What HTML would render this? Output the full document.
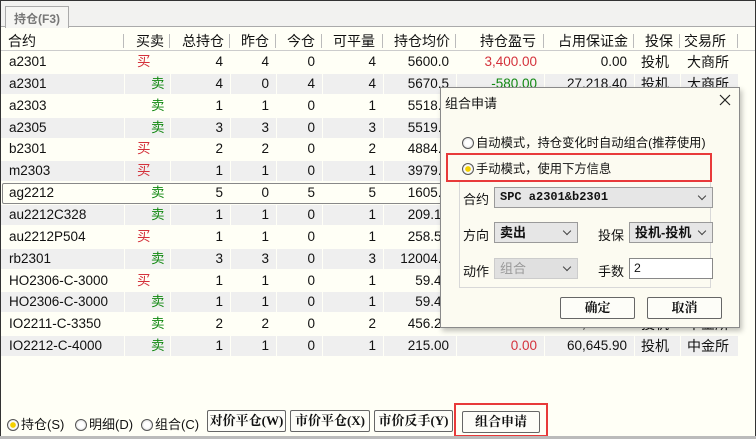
<!DOCTYPE html><html><head><meta charset="utf-8"><style>
*{box-sizing:border-box;margin:0;padding:0}
body{width:756px;height:439px;overflow:hidden;background:#fffff6;font-family:"Liberation Sans","Noto Sans CJK SC",sans-serif;position:relative;color:#111}
.frame{position:absolute;left:0;top:0;width:756px;height:439px;border:1px solid #333;border-bottom:none}
.tabbar{position:absolute;left:1px;top:1px;width:754px;height:26px;background:#f2f2f0;border-bottom:1px solid #aaa}
.tab{position:absolute;left:4px;top:5px;width:64px;height:22px;border:1px solid #aaa;border-bottom:none;background:#f6f6f3;font-size:12px;color:#777;font-weight:bold;padding:3px 0 0 8px}
.a{position:absolute;white-space:nowrap}
.hd{position:absolute;top:31px;font-size:14px;height:20px}
.sep{position:absolute;top:34px;width:1px;height:14px;background:#bbb}
.hline{position:absolute;left:1px;top:50px;width:754px;height:1px;background:#ccc}
.row{position:absolute;left:1px;height:22px;font-size:13.5px}
.c{position:absolute;top:1px;height:20px;line-height:20px;white-space:nowrap}
.sh .c{background:#efefef}
.r{text-align:right;padding-right:7px}
.red{color:#d4323c}.grn{color:#118811}
.dlg{position:absolute;left:440px;top:87px;width:300px;height:241px;background:#fcfbf1;border:1px solid #8a8a8a;box-shadow:2px 3px 5px rgba(0,0,0,.25);font-size:12.3px}
.rad{display:inline-block;width:12px;height:12px;border-radius:50%;border:1px solid #555;background:radial-gradient(circle,#fff 40%,#ccc);vertical-align:-2px;margin-right:2px}
.rad.on{background:radial-gradient(circle,#f4d000 35%,#fff 45%,#ccc)}
.combo{position:absolute;height:21px;background:#e6e6e6;border:1px solid #9a9a9a;font-size:13px;font-weight:bold;line-height:19px;padding-left:5px}
.combo:after{content:"";position:absolute;right:7px;top:5px;width:5px;height:5px;border-right:1px solid #444;border-bottom:1px solid #444;transform:rotate(45deg)}
.btn{position:absolute;height:22px;border:1px solid #666;border-radius:2px;background:#fdfdf8;font-size:13px;font-weight:bold;text-align:center;line-height:20px;font-family:"Liberation Serif","Noto Serif CJK SC",serif}
.redbox{position:absolute;border:2px solid #e83a3a}
</style></head><body>
<div class="frame"></div>
<div class="tabbar"><div class="tab">持仓(F3)</div></div>

<div class="hd" style="left:8px">合约</div>
<div class="hd" style="left:136px">买卖</div>
<div class="hd" style="left:182px">总持仓</div>
<div class="hd" style="left:241px">昨仓</div>
<div class="hd" style="left:287px">今仓</div>
<div class="hd" style="left:333px">可平量</div>
<div class="hd" style="left:394px">持仓均价</div>
<div class="hd" style="left:480px">持仓盈亏</div>
<div class="hd" style="left:558px">占用保证金</div>
<div class="hd" style="left:645px">投保</div>
<div class="hd" style="left:684px">交易所</div>
<div class="sep" style="left:123px"></div><div class="sep" style="left:169px"></div><div class="sep" style="left:229px"></div><div class="sep" style="left:275px"></div><div class="sep" style="left:321px"></div><div class="sep" style="left:382px"></div><div class="sep" style="left:455px"></div><div class="sep" style="left:543px"></div><div class="sep" style="left:633px"></div><div class="sep" style="left:679px"></div><div class="sep" style="left:737px"></div>
<div class="hline"></div>

<div id="rows"></div>
<script>
var D=[
["a2301","买",4,4,0,4,"5600.0","3,400.00","0.00","大商所"],
["a2301","卖",4,0,4,4,"5670.5","-580.00","27,218.40","大商所"],
["a2303","卖",1,1,0,1,"5518.0","-30.00","6,621.60","大商所"],
["a2305","卖",3,3,0,3,"5519.0","120.00","19,868.40","大商所"],
["b2301","买",2,2,0,2,"4884.0","200.00","11,721.60","大商所"],
["m2303","买",1,1,0,1,"3979.0","50.00","4,774.80","大商所"],
["ag2212","卖",5,0,5,5,"1605.0","0.00","10,000.00","上期所"],
["au2212C328","卖",1,1,0,1,"209.10","0.00","50,000.00","上期所"],
["au2212P504","买",1,1,0,1,"258.56","0.00","0.00","上期所"],
["rb2301","卖",3,3,0,3,"12004.0","0.00","6,000.00","上期所"],
["HO2306-C-3000","买",1,1,0,1,"59.40","0.00","0.00","中金所"],
["HO2306-C-3000","卖",1,1,0,1,"59.40","0.00","60,000.00","中金所"],
["IO2211-C-3350","卖",2,2,0,2,"456.20","0.00","200,795.00","中金所"],
["IO2212-C-4000","卖",1,1,0,1,"215.00","0.00","60,645.90","中金所"]];
var cols=[[0,123],[124,45],[170,59],[230,45],[276,45],[322,60],[383,72],[456,87],[544,89],[634,45],[680,57]];
var h="";
D.forEach(function(d,i){
 var top=51+i*21.85;
 h+='<div class="row'+(i%2?' sh':'')+'" style="top:'+top+'px;width:740px">';
 var v=[d[0],d[1],d[2],d[3],d[4],d[5],d[6],d[7],d[8],"投机",d[9]];
 v.forEach(function(x,j){
  var c=cols[j],cls="c",st="left:"+c[0]+"px;width:"+c[1]+"px;";
  if(j==0)st+="padding-left:8px;";
  else if(j==1){if(x=="买"){cls+=" red";st+="padding-left:12px;"}else{cls+=" grn";st+="padding-left:26px;"}}
  else if(j>=9)st+="padding-left:6px;font-size:14px;";
  else cls+=" r";
  if(j==7)cls+=(String(x).charAt(0)=="-"?" grn":" red");
  h+='<div class="'+cls+'" style="'+st+'">'+x+'</div>';
 });
 h+='</div>';
 if(i==6)h+='<div class="a" style="left:2px;top:'+(top+1)+'px;width:452px;height:21px;border:1px solid #888;border-radius:2px"></div>';
});
document.getElementById("rows").innerHTML=h;
</script>

<div class="dlg">
 <div class="a" style="left:4px;top:5px;font-size:13px">组合申请</div>
 <svg class="a" style="left:278px;top:6px" width="12" height="12"><path d="M1 1L11 11M11 1L1 11" stroke="#222" stroke-width="1.2"/></svg>
 <div class="a" style="left:21px;top:45px"><span class="rad"></span>自动模式，持仓变化时自动组合(推荐使用)</div>
 <div class="a" style="left:21px;top:71px"><span class="rad on"></span>手动模式，使用下方信息</div>
 <div class="a" style="left:18px;top:93px;width:252px;height:107px;border:1px solid #d8d8d8"></div>
 <div class="a" style="left:22px;top:101px;font-size:13px">合约</div>
 <div class="combo" style="left:53px;top:99px;width:219px;font-family:'Liberation Mono',monospace;font-size:12px">SPC a2301&amp;b2301</div>
 <div class="a" style="left:22px;top:137px;font-size:13px">方向</div>
 <div class="combo" style="left:53px;top:134px;width:84px">卖出</div>
 <div class="a" style="left:157px;top:137px;font-size:13px">投保</div>
 <div class="combo" style="left:188px;top:134px;width:84px">投机-投机</div>
 <div class="a" style="left:22px;top:173px;font-size:13px">动作</div>
 <div class="combo" style="left:53px;top:170px;width:84px;color:#999;font-weight:normal;background:#e0e0e0;border-color:#ccc">组合</div>
 <div class="a" style="left:157px;top:173px;font-size:13px">手数</div>
 <div class="a" style="left:188px;top:170px;width:84px;height:21px;border:1px solid #888;background:#fff;padding-left:4px;line-height:19px">2</div>
 <div class="btn" style="left:119px;top:209px;width:75px">确定</div>
 <div class="btn" style="left:206px;top:209px;width:75px">取消</div>
</div>
<div class="redbox" style="left:446px;top:153px;width:266px;height:29px"></div>

<div class="a" style="left:7px;top:414px;font-size:13px"><span class="rad on"></span>持仓(S)</div>
<div class="a" style="left:75px;top:414px;font-size:13px"><span class="rad"></span>明细(D)</div>
<div class="a" style="left:141px;top:414px;font-size:13px"><span class="rad"></span>组合(C)</div>
<div class="btn" style="left:207px;top:410px;width:79px">对价平仓(W)</div>
<div class="btn" style="left:290px;top:410px;width:80px">市价平仓(X)</div>
<div class="btn" style="left:374px;top:410px;width:79px">市价反手(Y)</div>
<div class="btn" style="left:462px;top:411px;width:78px">组合申请</div>
<div class="redbox" style="left:454px;top:403px;width:94px;height:34px"></div>
<div class="a" style="left:0;top:436px;width:756px;height:3px;background:#bbb"></div>
</body></html>
